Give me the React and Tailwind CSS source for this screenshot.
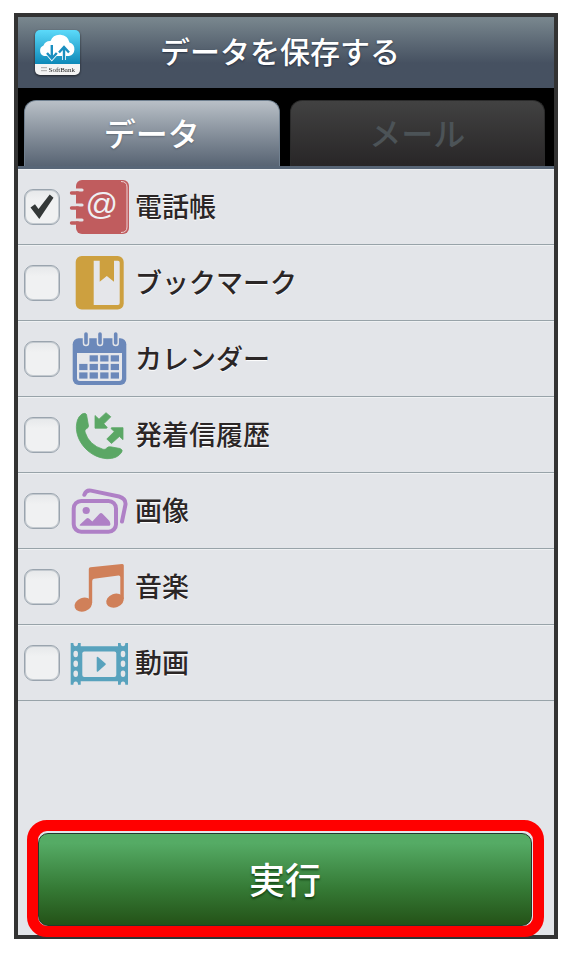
import {useState} from "react";
import clsx from "clsx";

function AppLogo() {
    return (
        <svg viewBox="0 0 45 45" className="size-[45px] shrink-0 drop-shadow-[0_1px_1px_rgba(0,0,0,0.6)]" role="img" aria-label="SoftBank">
            <defs>
                <linearGradient id="logo-sky" x1="0" y1="0" x2="0" y2="1">
                    <stop offset="0" stopColor="#5cdafa"/>
                    <stop offset="1" stopColor="#0b86b6"/>
                </linearGradient>
                <clipPath id="logo-clip"><rect width="45" height="45" rx="5"/></clipPath>
            </defs>
            <g clipPath="url(#logo-clip)">
                <rect width="45" height="35" fill="url(#logo-sky)"/>
                <rect y="34" width="45" height="11" fill="#f4f4f4"/>
                <path d="M9 26A5.600 5.600 0 0 1 8.500 15.500A7 7 0 0 1 15.500 11A10 10 0 0 1 34.500 12.500A7 7 0 0 1 34 26Z" fill="#fff"/>
                <path d="M16.800 15V28.500M12 23L16.800 28.500L21.800 23M29 30V17M24 22.500L29 17L34 22.500" fill="none" stroke="#fff" strokeWidth="4"/>
                <path d="M16.800 15V28.500M12 23L16.800 28.500L21.800 23M29 30V17M24 22.500L29 17L34 22.500" fill="none" stroke="#1a8fc0" strokeWidth="2.400"/>
                <path d="M6 37.700H12M6 40.700H12" stroke="#a8a8a8" strokeWidth="1"/>
                <text x="13.500" y="41.800" fontSize="7" fontFamily="Liberation Serif, serif" fill="#222">SoftBank</text>
            </g>
        </svg>
    )
}

function ContactsIcon() {
    return (
        <>
            <rect x="7" y="3" width="53" height="54" rx="6" fill="#c05c5e"/>
            <path d="M52 4.500Q58 4.500 58 10V50Q58 55.500 52 55.500" fill="none" stroke="#ecd4d6" strokeWidth="1"/>
            <path d="M4 13H13M4 28H13M4 43H13" stroke="#e3e4e8" strokeWidth="3.200" strokeLinecap="round"/>
            <path d="M2.500 16H9M2.500 31H9M2.500 46H9" stroke="#c05c5e" strokeWidth="3.400" strokeLinecap="round"/>
            <text x="16.500" y="37.500" fontSize="32" fontFamily="Liberation Sans, sans-serif" fill="#eff0f3">@</text>
        </>
    )
}

function BookmarkIcon() {
    return (
        <>
            <rect x="6.700" y="3" width="48" height="53.500" rx="6" fill="#cda03f"/>
            <path d="M24.700 7.700H30.700V28.700L37.800 23L45 28.700V7.700H49Q50.700 7.700 50.700 9.500V50Q50.700 52 49 52H24.700Z" fill="#e5e6ea"/>
        </>
    )
}

function CalendarIcon() {
    const columns = [10.2, 20.6, 31.2, 41.7]
    const rows = [26.300, 34.900, 43.400]

    return (
        <>
            <rect x="3.700" y="9.300" width="53.600" height="46.700" rx="6" fill="#6b88ba"/>
            <path d="M17 4V14M31 4V14M46.700 4V14" stroke="#e3e4e8" strokeWidth="6.500" strokeLinecap="round"/>
            <path d="M17 5V14M31 5V14M46.700 5V14" stroke="#6b88ba" strokeWidth="3.600" strokeLinecap="round"/>
            <path d="M8 24H53V49Q53 52 50 52H11Q8 52 8 49Z" fill="#e6e7eb"/>
            {rows.map((y, row) => columns.map((x, column) => (
                (row > 0 || column > 0) && <rect key={x} x={x} y={y} width="8.300" height="6.200" fill="#6b88ba"/>
            )))}
        </>
    )
}

function CallHistoryIcon() {
    return (
        <g fill="#5ba765" stroke="#5ba765" strokeWidth="0.800" strokeLinejoin="round">
            <path d="M13 9Q16.500 7.500 17.500 9.500L19.500 21Q19.500 23 17 24Q15.500 24.500 16 27Q20 40 34 44.300Q36.500 45 37.800 43Q39 41.500 41.500 41.800L51 43.500Q54.500 45 52.500 47.500Q48 54 38 53.700C18 52.500 3 32 8.500 15Q10 11 13 9Z"/>
            <path d="M26 10.500L30 14.200L37 7.700L41.800 11.800L34.800 18.800L38.300 22.500L37.500 23.200H26Z"/>
            <path d="M42.500 22.700H54V34.700L50.400 31.400L42.500 38.500L37.800 34L45.300 26.600L42 23.500Z"/>
        </g>
    )
}

function PicturesIcon() {
    return (
        <>
            <g fill="none" stroke="#af80c6" strokeWidth="4" strokeLinecap="round">
                <rect x="4.700" y="20" width="42.300" height="30.700" rx="7.500"/>
                <path d="M15.300 13.800Q17 8.700 22 9.600L50 15.500Q57 17.500 56.500 23.500L53 40.500"/>
            </g>
            <circle cx="17.200" cy="29.500" r="3.600" fill="#af80c6"/>
            <path d="M11 43.500L17.500 37.500Q18.700 36.300 20 37.500L23.300 40.500L30.500 32.800Q32 31.300 33.500 32.800L40.500 40Q42.500 44.700 40 44.700H11.500Q10 44.700 11 43.500Z" fill="#af80c6"/>
        </>
    )
}

function MusicIcon() {
    return (
        <g fill="#d08059">
            <path d="M19.800 46V12Q19.800 10.500 21.500 10.300L53 7Q54.800 6.800 54.800 8.500V42H51.300V20Q51.300 18.200 49.500 18.400L25 21.800Q23.200 22 23.200 24V46Z"/>
            <ellipse cx="14.300" cy="47.600" rx="9" ry="6.800" transform="rotate(-20 14.300 47.600)"/>
            <ellipse cx="46" cy="43.600" rx="9" ry="6.800" transform="rotate(-20 46 43.600)"/>
        </g>
    )
}

function MovieIcon() {
    return (
        <>
            <path d="M1.700 10H11.700V13.300H49V10H59V51.700H49V48.300H11.700V51.700H1.700Z" fill="#58a2bd"/>
            <rect x="13.300" y="18.500" width="34" height="25.500" rx="2" fill="#e5e6ea"/>
            {[6.700, 54].map(x => [10, 21, 30.800, 40.800, 51.700].map(y => (
                <ellipse key={`${x}-${y}`} cx={x} cy={y} rx="2.300" ry="3.200" fill="#e5e6ea"/>
            )))}
            <path d="M28.500 24.500L36 31.200L28.500 38Z" fill="#58a2bd" stroke="#58a2bd" strokeWidth="1.600" strokeLinejoin="round"/>
        </>
    )
}

const items = [
    {id: 'contacts', label: '電話帳', icon: ContactsIcon},
    {id: 'bookmarks', label: 'ブックマーク', icon: BookmarkIcon},
    {id: 'calendar', label: 'カレンダー', icon: CalendarIcon},
    {id: 'calls', label: '発着信履歴', icon: CallHistoryIcon},
    {id: 'pictures', label: '画像', icon: PicturesIcon},
    {id: 'music', label: '音楽', icon: MusicIcon},
    {id: 'movies', label: '動画', icon: MovieIcon},
]

function TabButton({ label, active, onClick }) {
    return (
        <button
            type="button"
            role="tab"
            aria-selected={active}
            onClick={onClick}
            className={clsx(
                'flex-1 h-[66px] pb-1 rounded-t-xl border border-b-0 text-[32px] leading-none font-medium',
                active
                    ? 'border-[#708090] bg-linear-to-b from-[#b9c0c7] to-[#586473] text-white [text-shadow:0_1px_2px_rgba(40,50,60,0.4)]'
                    : 'border-[#2b2b2b] bg-linear-to-b from-[#424242] to-[#282627] text-[#4c5357]'
            )}
        >
            {label}
        </button>
    )
}

function ItemRow({ item, checked, onChange }) {
    const Icon = item.icon

    return (
        <li className="border-t border-b border-t-[#eff1f3] border-b-[#98a3a9]">
            <label className="flex items-center h-[74px] pl-[6px]">
                <span className="grid shrink-0">
                    <input
                        type="checkbox"
                        checked={checked}
                        onChange={onChange}
                        className="peer col-start-1 row-start-1 appearance-none size-9 rounded-[9px] border border-[#9aa4ae] ring-1 ring-inset ring-[#c3c9cf] bg-linear-to-b from-[#e6e8ea] to-[#f0f1f2] to-30%"
                    />
                    <svg viewBox="0 0 36 36" className="col-start-1 row-start-1 size-9 invisible peer-checked:visible pointer-events-none" aria-hidden="true">
                        <path d="M6.500 18.500L11 15.300L14.500 20L25.700 5.500L29.500 8.700L15.300 30Z" fill="#343838"/>
                    </svg>
                </span>
                <svg viewBox="0 0 60 60" className="size-[60px] ml-[9px] shrink-0" aria-hidden="true">
                    <Icon/>
                </svg>
                <span className="ml-[6px] pb-1 text-[27px] leading-none font-medium text-[#2b2626] [text-shadow:0_1px_1px_#fff]">
                    {item.label}
                </span>
            </label>
        </li>
    )
}

export default function App() {
    const [tab, setTab] = useState('data')
    const [selected, setSelected] = useState(['contacts'])

    function toggle(id) {
        setSelected(selected.includes(id) ? selected.filter(s => s !== id) : [...selected, id])
    }

    return (
        <div className="flex min-h-screen bg-white pt-[13px] pr-3 pb-[14px] pl-[14px] font-['Noto_Sans_CJK_JP',sans-serif]">
            <div className="flex flex-1 flex-col border-4 border-[#333] bg-[#e3e5e9]">
                <header className="flex items-center h-[71px] pl-[17px] bg-linear-to-b from-[#7a888f] to-[#465161] to-65%">
                    <AppLogo/>
                    <h1 className="flex-1 pr-[74px] pb-[6px] text-center text-[30px] leading-none font-medium text-white [text-shadow:0_1px_2px_rgba(20,30,50,0.7)]">
                        データを保存する
                    </h1>
                </header>

                <div role="tablist" className="flex gap-[10px] border-b-[3px] border-[#586677] bg-black pt-3 pr-[9px] pl-[6px]">
                    <TabButton label="データ" active={tab === 'data'} onClick={() => setTab('data')}/>
                    <TabButton label="メール" active={tab === 'mail'} onClick={() => setTab('mail')}/>
                </div>

                <ul>
                    {items.map(item => (
                        <ItemRow
                            key={item.id}
                            item={item}
                            checked={selected.includes(item.id)}
                            onChange={() => toggle(item.id)}
                        />
                    ))}
                </ul>

                <div className="mr-[10px] ml-[9px] mt-auto -mb-[2px] rounded-[20px] border-[11px] border-[#f00] bg-[#e3e5e9] pt-[2px] pr-px">
                    <button
                        type="button"
                        className="block h-[93px] w-full pb-1 rounded-[10px] border border-[#24382c] bg-linear-to-b from-[#55ab65] from-10% via-[#357a35] via-60% to-[#245217] text-[36px] leading-none font-medium text-white [text-shadow:0_2px_2px_rgba(0,40,0,0.6)]"
                    >
                        実行
                    </button>
                </div>
            </div>
        </div>
    )
}
